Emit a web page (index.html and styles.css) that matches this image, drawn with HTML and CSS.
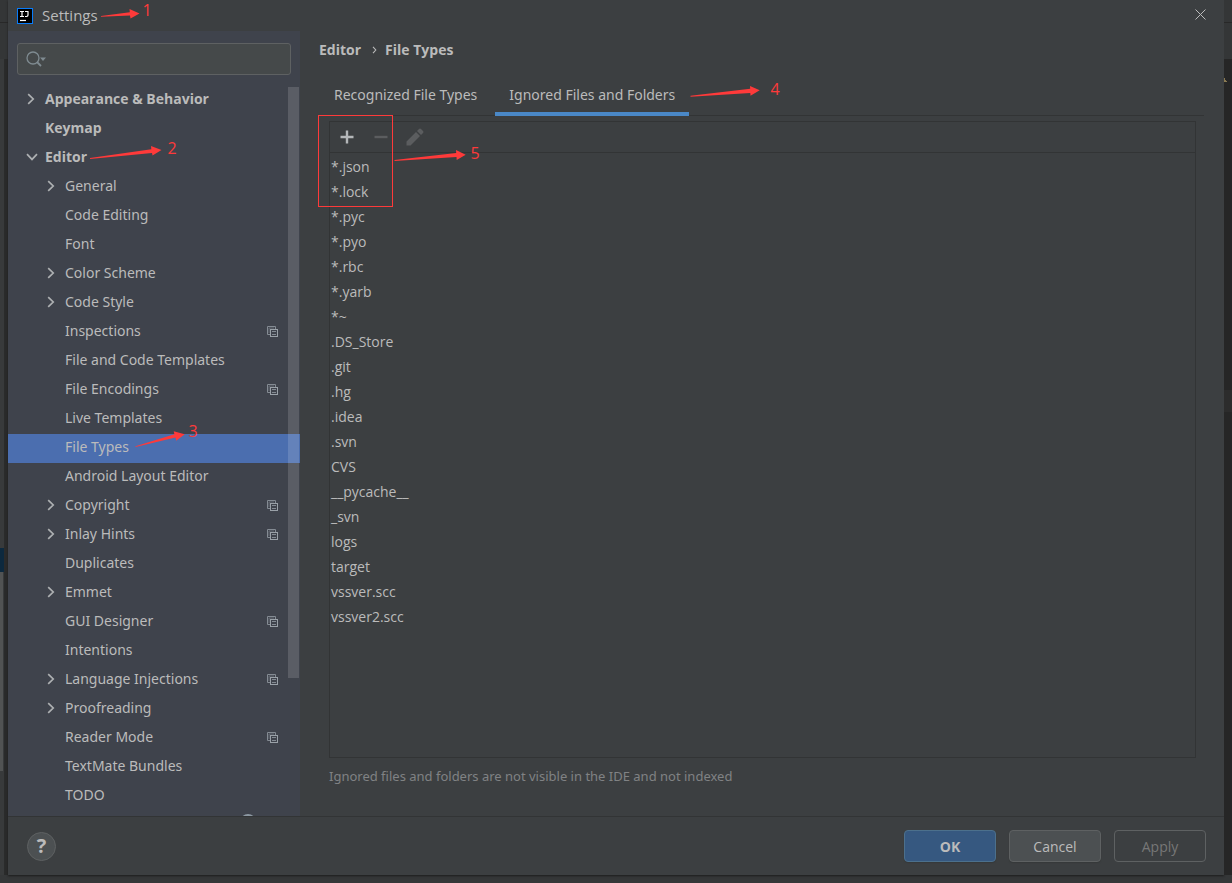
FILE: index.html
```
<!DOCTYPE html>
<html lang="en">
<head>
<meta charset="UTF-8">
<meta name="viewport" content="width=device-width, initial-scale=1.0">
<title>Settings</title>
<link rel="stylesheet" href="styles.css">
</head>
<body>

<!-- shared icons -->
<svg class="defs" aria-hidden="true">
  <symbol id="right" viewBox="0 0 10 12"><path d="M2.2 1.2 7.2 6 2.2 10.8" fill="none" stroke="#adb0b2" stroke-width="1.7"/></symbol>
  <symbol id="down" viewBox="0 0 12 10"><path d="M1 2.2 6 7.4 11 2.2" fill="none" stroke="#adb0b2" stroke-width="1.7"/></symbol>
  <symbol id="copy" viewBox="0 0 12 12">
    <path d="M3 8.5H.5v-8h8V3" fill="none" stroke="#848b93"/>
    <path d="M2 7V2h5" fill="none" stroke="#666c74"/>
    <rect x="3.5" y="3.5" width="7" height="7" fill="#3f434c" stroke="#9aa1a8"/>
    <path d="M5 5.5h4M5 8.5h4" stroke="#848b93"/>
  </symbol>
</svg>

<div class="screen">
  <div class="edge left"><i class="e-top"></i><i class="e-mid"></i><i class="e-sel"></i><i class="e-bar"></i></div>

  <div class="dialog">
    <header class="titlebar">
      <svg class="logo" viewBox="0 0 16 16"><rect width="16" height="16" fill="#087cfa"/><rect x="1" y="1" width="14" height="14" fill="#000"/><path d="M3 3.5h4M5 3.5v5M3 8.5h4M8 3.5h3.5M11 3.5v3.6q0 1.4-1.4 1.4H8" fill="none" stroke="#fff" stroke-width="1.2"/><path d="M3 12.5h6" stroke="#fff" stroke-width="1.2"/></svg>
      <span class="title">Settings</span>
      <button class="close" aria-label="Close"><svg viewBox="0 0 11 11"><path d="M.5.5l10 10M10.5.5l-10 10" stroke="#bbb" stroke-width="1"/></svg></button>
    </header>

    <div class="body">
      <aside class="sidebar">
        <label class="search">
          <svg viewBox="0 0 20 16"><circle cx="7" cy="7" r="6" fill="none" stroke="#7f8b91" stroke-width="1.3"/><path d="M11 11l4 4" stroke="#7f8b91" stroke-width="1.8"/><path d="M14 6.5h6l-3 3.5z" fill="#7f8b91"/></svg>
          <input type="text" aria-label="Search settings">
        </label>
        <nav class="tree">
          <a href="#" class="top"><svg class="arrow"><use href="#right"/></svg>Appearance &amp; Behavior</a>
          <a href="#" class="top">Keymap</a>
          <a href="#" class="top"><svg class="arrow open"><use href="#down"/></svg>Editor</a>
          <a href="#"><svg class="arrow"><use href="#right"/></svg>General</a>
          <a href="#">Code Editing</a>
          <a href="#">Font</a>
          <a href="#"><svg class="arrow"><use href="#right"/></svg>Color Scheme</a>
          <a href="#"><svg class="arrow"><use href="#right"/></svg>Code Style</a>
          <a href="#">Inspections<svg class="copy"><use href="#copy"/></svg></a>
          <a href="#">File and Code Templates</a>
          <a href="#">File Encodings<svg class="copy"><use href="#copy"/></svg></a>
          <a href="#">Live Templates</a>
          <a href="#" class="selected" aria-current="page">File Types</a>
          <a href="#">Android Layout Editor</a>
          <a href="#"><svg class="arrow"><use href="#right"/></svg>Copyright<svg class="copy"><use href="#copy"/></svg></a>
          <a href="#"><svg class="arrow"><use href="#right"/></svg>Inlay Hints<svg class="copy"><use href="#copy"/></svg></a>
          <a href="#">Duplicates</a>
          <a href="#"><svg class="arrow"><use href="#right"/></svg>Emmet</a>
          <a href="#">GUI Designer<svg class="copy"><use href="#copy"/></svg></a>
          <a href="#">Intentions</a>
          <a href="#"><svg class="arrow"><use href="#right"/></svg>Language Injections<svg class="copy"><use href="#copy"/></svg></a>
          <a href="#"><svg class="arrow"><use href="#right"/></svg>Proofreading</a>
          <a href="#">Reader Mode<svg class="copy"><use href="#copy"/></svg></a>
          <a href="#">TextMate Bundles</a>
          <a href="#">TODO</a>
          <div class="cut"><svg viewBox="0 0 16 16"><circle cx="8" cy="8" r="8" fill="#8d99a3"/></svg></div>
          <span class="thumb"></span>
        </nav>
      </aside>

      <main class="content">
        <h1 class="crumbs">Editor<svg viewBox="0 0 5 8"><path d="M1 .8 3.8 4 1 7.2" fill="none" stroke="#bbb" stroke-width="1.1"/></svg>File Types</h1>
        <div class="tabs" role="tablist">
          <button role="tab" aria-selected="false">Recognized File Types</button>
          <button role="tab" aria-selected="true" class="active">Ignored Files and Folders</button>
        </div>
        <section class="panel">
          <div class="toolbar">
            <button aria-label="Add"><svg viewBox="0 0 18 18"><path d="M9 2.5v13M2.5 9h13" stroke="#b4b7b9" stroke-width="2.4"/></svg></button>
            <button aria-label="Remove" disabled><svg viewBox="0 0 18 18"><path d="M2.5 9h13" stroke="#5b5d5f" stroke-width="2.4"/></svg></button>
            <button aria-label="Edit" disabled><svg viewBox="0 0 18 18"><path d="M.5 17.5v-4L10 4l4 4-9.5 9.5zM11 3l2-2q1-1 2 0l2 2q1 1 0 2l-2 2z" fill="#5b5d5f"/></svg></button>
          </div>
          <ul class="files">
            <li>*.json</li>
            <li>*.lock</li>
            <li>*.pyc</li>
            <li>*.pyo</li>
            <li>*.rbc</li>
            <li>*.yarb</li>
            <li>*~</li>
            <li>.DS_Store</li>
            <li>.git</li>
            <li>.hg</li>
            <li>.idea</li>
            <li>.svn</li>
            <li>CVS</li>
            <li>__pycache__</li>
            <li>_svn</li>
            <li>logs</li>
            <li>target</li>
            <li>vssver.scc</li>
            <li>vssver2.scc</li>
          </ul>
        </section>
        <p class="hint">Ignored files and folders are not visible in the IDE and not indexed</p>
      </main>
    </div>

    <footer class="footer">
      <button class="help" aria-label="Help">?</button>
      <button class="btn ok">OK</button>
      <button class="btn">Cancel</button>
      <button class="btn" disabled>Apply</button>
    </footer>
  </div>

  <div class="edge right"><i class="e-top"></i><i class="e-mid"></i><i class="e-warn"></i><i class="e-hl"></i></div>
</div>

<!-- numbered steps -->
<svg class="marks" width="1" height="1">
  <path d="M101 16.8 130 15.5 130.5 18.5 139.5 13.5 129.5 9 129.8 12.2 101 16z"/>
  <path d="M90 159 152 153 152.5 155.5 161.5 150 151 146 151.3 149.2 90 158z"/>
  <path d="M135.5 447 175.5 437.5 176.3 440.7 184.7 434.3 173.7 431.3 174.4 434.2 135.5 446.2z"/>
  <path d="M690.5 96.8 750.3 92.9 750.5 95.7 759.7 90.3 750 86 750.2 88.8 690.5 95.8z"/>
  <path d="M394.5 161 456.5 157 456.7 160 465.7 154.7 456 150 456.2 153 394.5 160z"/>
  <rect x="318.5" y="115.5" width="74" height="91"/>
  <text x="147" y="16">1</text>
  <text x="172" y="154">2</text>
  <text x="193" y="437">3</text>
  <text x="775" y="95">4</text>
  <text x="475" y="159">5</text>
</svg>

</body>
</html>
```

FILE: styles.css
```
:root{
  --bg:#3c3f41;
  --side:#3f434c;
  --line:#323435;
  --text:#bbbbbb;
  --red:#fe3a3a;
}

*{margin:0;padding:0;box-sizing:border-box}
html,body{height:100%}
body{font-family:'Open Sans','Noto Sans',sans-serif;font-size:14px;line-height:20px;color:var(--text);background:#353738;overflow:hidden}
button{font:inherit;color:inherit;background:none;border:0}
svg{display:block;flex:none}
.defs{position:absolute;width:0;height:0}

/* ---------------- Window ---------------- */
.screen{display:flex;height:100vh;padding-bottom:8px}
.dialog{flex:1;min-width:0;display:flex;flex-direction:column;background:var(--bg);box-shadow:0 1px 2px #1c1c1c}

/* strips of the IDE behind the dialog */
.edge{display:flex;flex-direction:column;width:8px;background:#2b2b2b}
.edge i{flex:none}
.e-top{height:23px;background:#343637;border-bottom:1px solid #282828}
.e-mid{height:36px;background:#343637}
.left{background:linear-gradient(90deg,#383a3b 4px,#2a2b2b 4px)}
.left .e-sel{height:24px;margin-top:489px;width:4px;background:#0d293e}
.left .e-bar{height:199px;width:3px;background:#515353}
.right{background:#262626}
.right .e-warn{width:3px;height:5px;margin-top:18px;background:linear-gradient(60deg,#8a7a52 50%,transparent 50%)}
.right .e-hl{height:22px;margin-top:308px;background:#2c2c2c}

.titlebar{display:flex;align-items:center;height:31px;padding:0 17px 2px 9px}
.logo{width:16px;height:16px;margin-top:2px}
.title{margin-left:9px;font-size:15px}
.close{margin-left:auto;padding:1px}
.close svg{width:11px;height:11px}

.body{flex:1;min-height:0;display:flex}

/* ---------------- Sidebar ---------------- */
.sidebar{display:flex;flex-direction:column;width:292px;background:var(--side)}
.search{display:flex;align-items:center;height:32px;margin:12px 9px 11px;padding:0 8px;background:#45494a;border:1px solid #5e6162;border-radius:3px}
.search svg{width:20px;height:16px}
.search input{flex:1;min-width:0;font:inherit;color:inherit;background:none;border:0;outline:0}
.tree{position:relative;flex:1;min-height:0;overflow:hidden;font-family:'Noto Sans',sans-serif}
.tree a{display:flex;align-items:center;height:29px;padding:0 21px 3px 57px;color:inherit;text-decoration:none;white-space:nowrap}
.tree .top{padding-left:37px;font-family:'Open Sans',sans-serif;font-weight:700}
.tree .selected{background:#4b6eaf}
.arrow{width:10px;height:12px;margin:0 9px 0 -19px}
.arrow.open{width:12px;height:10px;margin:0 7px 0 -19px}
.copy{width:12px;height:12px;margin:2px 0 0 auto}
.cut{display:flex;justify-content:flex-end;padding:3px 44px 0 0}
.cut svg{width:16px;height:16px}
.thumb{position:absolute;top:1px;right:1px;width:11px;height:591px;background:rgba(255,255,255,.14)}

/* ---------------- Content ---------------- */
.content{flex:1;min-width:0;display:flex;flex-direction:column;padding:9px 20px 30px 19px}
.crumbs{display:flex;align-items:center;height:20px;font-size:14px;font-weight:700}
.crumbs svg{width:5px;height:8px;margin:0 8px 0 11px}
.tabs{display:flex;gap:4px;height:56px;padding:12px 0 0 1px;border-bottom:1px solid var(--line);font-family:'Noto Sans',sans-serif}
.tabs button{height:44px;padding:6px 14px 0;border-bottom:4px solid transparent}
.tabs .active{border-bottom-color:#4a88c7}
.panel{flex:1;min-height:0;margin:5px 8px 0 10px;border:1px solid var(--line)}
.toolbar{display:flex;align-items:center;gap:16px;height:31px;padding:0 8px;border-bottom:1px solid var(--line)}
.toolbar svg{width:18px;height:18px}
.files{padding:1px;list-style:none}
.files li{height:25px;line-height:25px}
.hint{margin:8px 10px 0;font-family:'Noto Sans',sans-serif;font-size:13px;color:#808284}

/* ---------------- Footer ---------------- */
.footer{display:flex;align-items:center;gap:13px;height:59px;padding:0 18px 0 19px;border-top:1px solid var(--line)}
.help{width:29px;height:29px;margin-right:auto;border:1px solid #5e6162;border-radius:50%;background:#4c5052;font-size:20px;font-weight:700;line-height:26px}
.btn{width:92px;height:32px;padding-top:2px;background:#4c5052;border:1px solid #5e6162;border-radius:4px;box-shadow:0 1px 1px #36393a}
.btn.ok{background:#365880;border-color:#4c708c;font-weight:700}
.btn:disabled{background:none;color:#777;box-shadow:none}

/* ---------------- Marks ---------------- */
.marks{position:absolute;top:0;left:0;overflow:visible;pointer-events:none;fill:var(--red)}
.marks rect{fill:none;stroke:var(--red)}
.marks text{font-size:16px;text-anchor:middle}
```
